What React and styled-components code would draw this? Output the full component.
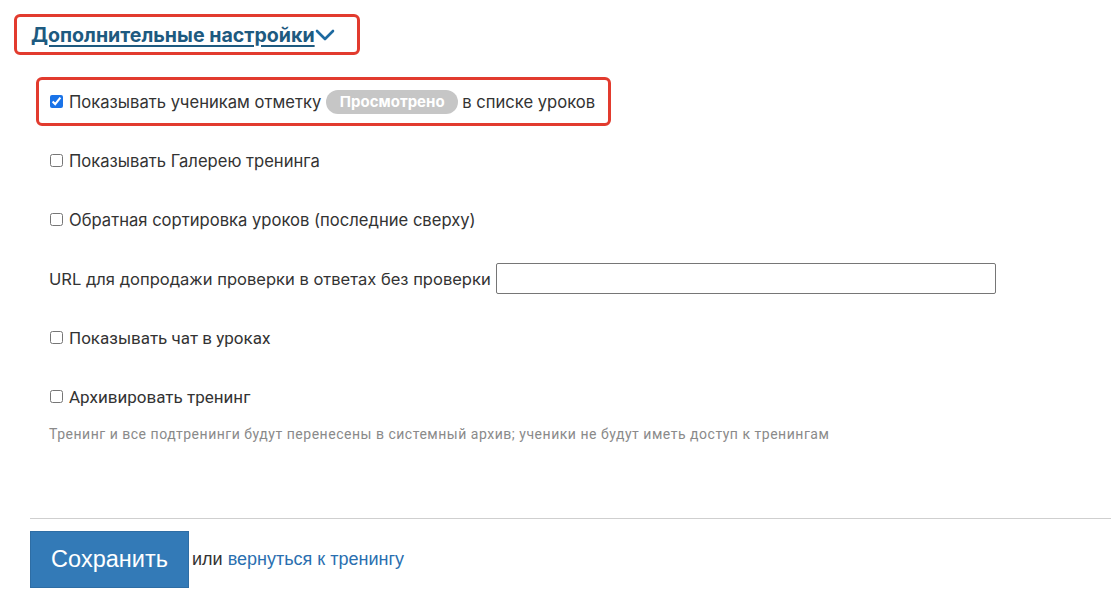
import React from "react";
import styled, { createGlobalStyle } from "styled-components";

const Global = createGlobalStyle`
  html, body { margin: 0; padding: 0; background: #fff; }
  body { font-family: Inter, "Noto Sans", sans-serif; color: #333; }
`;

const Page = styled.div`
  width: 1111px;
  height: 607px;
  overflow: hidden;
  padding-top: 14px;
  box-sizing: border-box;
`;

const HeadingBox = styled.div`
  margin-left: 14px;
  width: 346px;
  height: 41px;
  box-sizing: border-box;
  border: 3px solid #e23b2e;
  border-radius: 6px;
  display: flex;
  align-items: center;
  padding-left: 14px;
`;

const HeadingLink = styled.a`
  font-size: 19.6px;
  font-weight: 700;
  color: #1d5a80;
  text-decoration: underline;
  text-underline-offset: 3px;
  text-decoration-thickness: 2px;
  display: inline-flex;
  align-items: center;
  cursor: pointer;
`;

const Options = styled.div`
  margin-top: 17px;
  display: flex;
  flex-direction: column;
`;

const Row = styled.div`
  height: 59px;
  display: flex;
  align-items: center;
  padding-left: ${(p) => p.$indent ?? 50}px;
  box-sizing: border-box;
`;

const HighlightBox = styled.div`
  margin-left: 36px;
  width: 575px;
  height: 49px;
  box-sizing: border-box;
  border: 3px solid #e23b2e;
  border-radius: 6px;
  display: flex;
  align-items: center;
  padding-left: 11px;
`;

const CheckLabel = styled.label`
  display: flex;
  align-items: center;
  font-size: 16.6px;
  color: #333;
  white-space: nowrap;
`;

const Check = styled.input.attrs({ type: "checkbox" })`
  width: 13px;
  height: 13px;
  margin: 0 6px 0 0;
  accent-color: #1a73e8;
`;

const Badge = styled.span`
  display: inline-flex;
  align-items: center;
  justify-content: center;
  height: 24px;
  width: 132px;
  margin: 0 4px 0 5px;
  border-radius: 12px;
  background: #c6c6c6;
  color: #fff;
  font-weight: 700;
  font-size: 15px;
`;

const FieldLabel = styled.label`
  display: flex;
  align-items: center;
  font-size: 16.55px;
  color: #333;
  white-space: nowrap;
`;

const TextInput = styled.input.attrs({ type: "text" })`
  width: 500px;
  height: 31px;
  box-sizing: border-box;
  margin-left: 5px;
  border: 1px solid #767676;
  border-radius: 2px;
  padding: 0 6px;
  font-size: 15px;
`;

const CondensedLabel = styled(CheckLabel)`
  font-family: Roboto, "Noto Sans", sans-serif;
  font-size: 17px;
`;

const Hint = styled.div`
  margin-left: 49px;
  margin-top: -1px;
  font-family: Roboto, "Noto Sans", sans-serif;
  font-size: 14px;
  letter-spacing: 0.52px;
  color: #8a8a8a;
  line-height: 18px;
`;

const Divider = styled.hr`
  margin: 75px 0 0 30px;
  border: 0;
  border-top: 1px solid #cfcfcf;
  height: 0;
`;

const Actions = styled.div`
  margin: 12px 0 0 30px;
  display: flex;
  align-items: center;
  font-family: "Liberation Sans", Arial, sans-serif;
  font-size: 18px;
  color: #333;
`;

const SaveButton = styled.button`
  width: 159px;
  height: 57px;
  background: #337ab7;
  border: 1px solid #2e6da4;
  color: #fff;
  font-family: "Liberation Sans", Arial, sans-serif;
  font-size: 23.5px;
  margin-right: 3px;
  padding: 0;
  cursor: pointer;
`;

const BackLink = styled.a`
  color: #2a6fb0;
  margin-left: 5px;
  text-decoration: none;
`;

export default function App() {
  return (
    <>
      <Global />
      <Page>
        <HeadingBox>
          <HeadingLink>
            Дополнительные настройки
            <svg width="20" height="14" viewBox="0 0 20 14">
              <path d="M2 3 L10 11 L18 3" fill="none" stroke="#1d6aa0" strokeWidth="2.6" strokeLinecap="round" strokeLinejoin="round" />
            </svg>
          </HeadingLink>
        </HeadingBox>
        <Options>
          <Row $indent={0}>
            <HighlightBox>
              <CheckLabel>
                <Check defaultChecked />
                Показывать ученикам отметку
                <Badge>Просмотрено</Badge>
                в списке уроков
              </CheckLabel>
            </HighlightBox>
          </Row>
          <Row>
            <CheckLabel>
              <Check />
              Показывать Галерею тренинга
            </CheckLabel>
          </Row>
          <Row>
            <CheckLabel>
              <Check />
              Обратная сортировка уроков (последние сверху)
            </CheckLabel>
          </Row>
          <Row $indent={49}>
            <FieldLabel>
              URL для допродажи проверки в ответах без проверки
              <TextInput />
            </FieldLabel>
          </Row>
          <Row>
            <CondensedLabel>
              <Check />
              Показывать чат в уроках
            </CondensedLabel>
          </Row>
          <Row>
            <CondensedLabel>
              <Check />
              Архивировать тренинг
            </CondensedLabel>
          </Row>
          <Hint>
            Тренинг и все подтренинги будут перенесены в системный архив; ученики не будут иметь доступ к тренингам
          </Hint>
        </Options>
        <Divider />
        <Actions>
          <SaveButton>Сохранить</SaveButton>
          или
          <BackLink>вернуться к тренингу</BackLink>
        </Actions>
      </Page>
    </>
  );
}
